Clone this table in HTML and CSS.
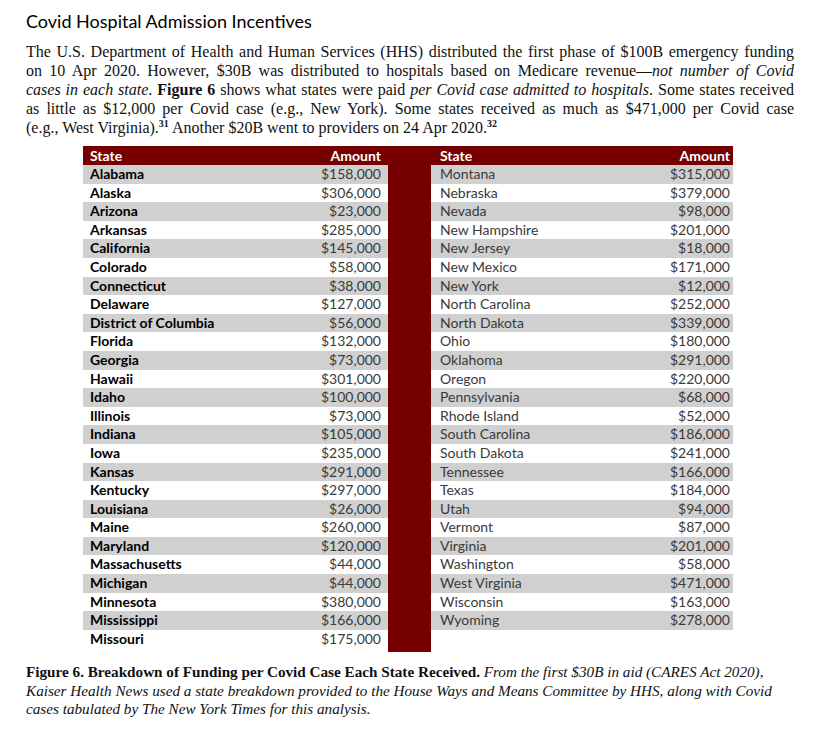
FILE: index.html
```html
<!DOCTYPE html>
<html lang="en">
<head>
<meta charset="utf-8">
<title>Covid Hospital Admission Incentives</title>
<link rel="stylesheet" href="styles.css">
</head>
<body>
<main class="page">
  <h1 class="title">Covid Hospital Admission Incentives</h1>
  <p class="intro">
    <span class="line">The U.S. Department of Health and Human Services (HHS) distributed the first phase of $100B emergency funding</span>
    <span class="line">on 10 Apr 2020. However, $30B was distributed to hospitals based on Medicare revenue—<em>not number of Covid</em></span>
    <span class="line"><em>cases in each state</em>. <strong>Figure 6</strong> shows what states were paid <em>per Covid case admitted to hospitals</em>. Some states received</span>
    <span class="line">as little as $12,000 per Covid case (e.g., New York). Some states received as much as $471,000 per Covid case</span>
    <span class="line last">(e.g., West Virginia).<sup>31</sup> Another $20B went to providers on 24 Apr 2020.<sup>32</sup></span>
  </p>

  <section class="figure">
    <div class="head">
      <div class="hcell"><span>State</span><span>Amount</span></div>
      <div class="hgap"></div>
      <div class="hcell right"><span>State</span><span>Amount</span></div>
    </div>
    <div class="body">
      <div class="col left" id="left"></div>
      <div class="divider"></div>
      <div class="col right" id="right"></div>
    </div>
  </section>

  <p class="caption"><strong>Figure 6. Breakdown of Funding per Covid Case Each State Received.</strong> <em>From the first $30B in aid (CARES Act 2020),</em><br><em>Kaiser Health News used a state breakdown provided to the House Ways and Means Committee by HHS, along with Covid</em><br><em>cases tabulated by The New York Times for this analysis.</em></p>
</main>
<script src="script.js"></script>
</body>
</html>
```

FILE: script.js
```js
const left = [
  ["Alabama","$158,000"],["Alaska","$306,000"],["Arizona","$23,000"],["Arkansas","$285,000"],
  ["California","$145,000"],["Colorado","$58,000"],["Connecticut","$38,000"],["Delaware","$127,000"],
  ["District of Columbia","$56,000"],["Florida","$132,000"],["Georgia","$73,000"],["Hawaii","$301,000"],
  ["Idaho","$100,000"],["Illinois","$73,000"],["Indiana","$105,000"],["Iowa","$235,000"],
  ["Kansas","$291,000"],["Kentucky","$297,000"],["Louisiana","$26,000"],["Maine","$260,000"],
  ["Maryland","$120,000"],["Massachusetts","$44,000"],["Michigan","$44,000"],["Minnesota","$380,000"],
  ["Mississippi","$166,000"],["Missouri","$175,000"]
];
const right = [
  ["Montana","$315,000"],["Nebraska","$379,000"],["Nevada","$98,000"],["New Hampshire","$201,000"],
  ["New Jersey","$18,000"],["New Mexico","$171,000"],["New York","$12,000"],["North Carolina","$252,000"],
  ["North Dakota","$339,000"],["Ohio","$180,000"],["Oklahoma","$291,000"],["Oregon","$220,000"],
  ["Pennsylvania","$68,000"],["Rhode Island","$52,000"],["South Carolina","$186,000"],["South Dakota","$241,000"],
  ["Tennessee","$166,000"],["Texas","$184,000"],["Utah","$94,000"],["Vermont","$87,000"],
  ["Virginia","$201,000"],["Washington","$58,000"],["West Virginia","$471,000"],["Wisconsin","$163,000"],
  ["Wyoming","$278,000"]
];
function fill(id, rows) {
  const el = document.getElementById(id);
  rows.forEach(([s, a]) => {
    const r = document.createElement("div");
    r.className = "row";
    const n = document.createElement("span");
    n.className = "name";
    n.textContent = s;
    const v = document.createElement("span");
    v.className = "amt";
    v.textContent = a;
    r.append(n, v);
    el.append(r);
  });
}
fill("left", left);
fill("right", right);
```

FILE: styles.css
```css
* { box-sizing: border-box; }
html, body { margin: 0; padding: 0; background: #fff; }
.page {
  padding: 9px 26px 0 26px;
  width: 833px;
}
.title {
  margin: 0;
  font-family: Lato, "Open Sans", sans-serif;
  font-weight: 400;
  font-size: 18px;
  line-height: 24px;
  color: #000;
}
.intro {
  margin: 9px 0 0 0;
  width: 768px;
  font-family: "Liberation Serif", "Times New Roman", serif;
  font-size: 16px;
  line-height: 19px;
  color: #111;
}
.intro .line { display: block; text-align: justify; text-align-last: justify; white-space: nowrap; }
.intro .line.last { text-align-last: left; }
.intro sup { font-size: 10px; font-weight: 700; vertical-align: 6px; line-height: 0; }
.figure {
  margin: 9px 0 0 57px;
  width: 650px;
  font-family: Lato, "Open Sans", sans-serif;
  font-size: 14px;
}
.head {
  display: grid;
  grid-template-columns: 305px 43px 302px;
  height: 19px;
  background: #760000;
  color: #fff;
  font-weight: 700;
  line-height: 19px;
}
.hcell { display: flex; justify-content: space-between; padding: 0 7px; }
.hcell.right { padding: 0 3px 0 9px; }
.body {
  display: grid;
  grid-template-columns: 305px 43px 302px;
}
.col.left { padding-bottom: 4px; }
.divider { background: #760000; }
.row {
  display: flex;
  justify-content: space-between;
  height: 18.6px;
  line-height: 18.6px;
  padding: 0 7px;
  color: #3a3a3a;
}
.col.right .row { padding: 0 3px 0 9px; }
.row:nth-child(odd) { background: #d0d0d0; }
.col.left .name { color: #000; font-weight: 700; }
.col.right .name { color: #3a3a3a; }
.caption {
  margin: 11px 0 0 0;
  font-family: "Liberation Serif", "Times New Roman", serif;
  font-size: 15.2px;
  line-height: 18.5px;
  color: #111;
}
```
